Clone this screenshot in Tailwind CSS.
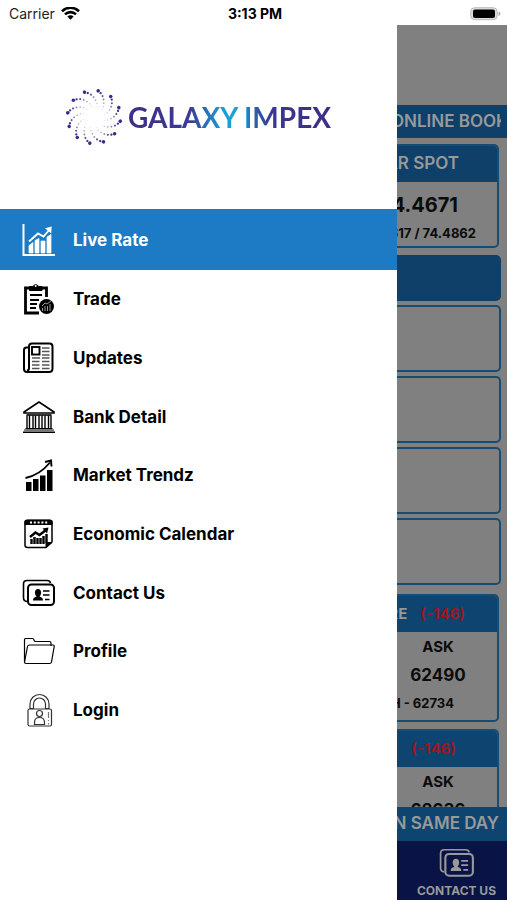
<!DOCTYPE html>
<html lang="en">
<head>
<meta charset="utf-8">
<meta name="viewport" content="width=device-width, initial-scale=1">
<title>Galaxy Impex</title>
<script src="https://cdn.jsdelivr.net/npm/@tailwindcss/browser@4"></script>
</head>
<body class="bg-white font-['Inter',sans-serif] text-black">
<div class="flex h-screen flex-col overflow-hidden">
  <!-- Status bar -->
  <header class="grid h-[25px] shrink-0 grid-cols-3 items-center pt-[3px] pr-[6px] pl-[9px] text-sm">
    <div class="flex items-center gap-[6px] text-[#222]">
      <span>Carrier</span>
      <svg class="h-[14px] w-[19px]" viewBox="0 0 19 14" fill="none" stroke="#000" stroke-width="2.6" aria-label="Wi-Fi"><path d="M1 4.200a12.2 12.2 0 0 1 17 0M4 7.400a7.8 7.8 0 0 1 11 0"/><path d="M6.4 9.600a4.4 4.4 0 0 1 6.2 0L9.500 12.800z" fill="#000" stroke="none"/></svg>
    </div>
    <time class="text-center font-bold">3:13 PM</time>
    <svg class="h-[15px] w-[31px] justify-self-end" viewBox="0 0 31 15" aria-label="Battery full"><rect x=".7" y=".7" width="26.500" height="12" rx="4" fill="#ddd" stroke="#bbb"/><rect x="3" y="2.500" width="22" height="8.500" rx="2" fill="#000"/><path d="M28.500 4.500v4.500q2-.7 2-2.250T28.500 4.500z" fill="#aaa"/></svg>
  </header>

  <div class="flex min-h-0 flex-1">
    <!-- Drawer -->
    <aside class="flex min-w-0 flex-1 flex-col bg-white">
      <div class="flex h-[184px] shrink-0 items-center justify-center gap-[6px]">
        <svg class="h-[58px] w-[56px] shrink-0" viewBox="-87 -90 174 180" aria-hidden="true">
          <defs>
            <g id="arm">
              <circle cx="-64" cy="-52" r="5.500" fill="#392b88"/><circle cx="-54" cy="-55" r="3.600" fill="#403391"/><circle cx="-43" cy="-55.500" r="3.200" fill="#5b52a6"/><circle cx="-32" cy="-53" r="2.800" fill="#7c76bb"/><circle cx="-22" cy="-48" r="2.400" fill="#9a98cd"/><circle cx="-13" cy="-41" r="2" fill="#b3bbe0"/><circle cx="-7" cy="-33" r="1.600" fill="#c5d8ee"/>
            </g>
          </defs>
          <use href="#arm"/><use href="#arm" transform="rotate(30)"/><use href="#arm" transform="rotate(60)"/><use href="#arm" transform="rotate(90)"/><use href="#arm" transform="rotate(120)"/><use href="#arm" transform="rotate(150)"/><use href="#arm" transform="rotate(180)"/><use href="#arm" transform="rotate(210)"/><use href="#arm" transform="rotate(240)"/><use href="#arm" transform="rotate(270)"/><use href="#arm" transform="rotate(300)"/><use href="#arm" transform="rotate(330)"/>
        </svg>
        <h1 class="bg-[linear-gradient(90deg,#3b2f87_0%,#3d3a90_30%,#1c9ad6_46%,#16a5df_56%,#2b62a8_62%,#3d3590_72%,#3b2f87_100%)] bg-clip-text font-['Lato',sans-serif] text-[28px] leading-9 font-bold whitespace-nowrap text-transparent">GALAXY IMPEX</h1>
      </div>
      <nav class="flex flex-col text-[17px] leading-6 font-bold">
        <a href="#" class="flex h-[61px] items-center gap-[17px] bg-[#1d7ac5] pl-[22px] text-white">
          <svg class="size-[34px]" viewBox="0 0 34 34" fill="none" stroke="currentColor"><path d="M1.500 1v31H33" stroke-width="2"/><path d="M7 30V22.500l4-3V30zM13 30V17.500l4-2V30zM19 30V18h4v12zM25 30V14l4-2.500V30z" fill="currentColor" stroke-width=".7"/><path d="M7 18.500l9-8 5.500 3L28 6" stroke-width="1.900"/><path d="M23 5.300L29.700 3.500l-.5 7z" fill="currentColor" stroke="none"/></svg>
          <span>Live Rate</span></a>
        <a href="#" class="flex h-[58px] items-center gap-[17px] pl-[22px]">
          <svg class="size-[34px]" viewBox="0 0 34 34" fill="none" stroke="currentColor"><path d="M8 6H3.500v25H17M19 6h5.500v9" stroke-width="2.800"/><path d="M7.500 8.500V4.500h3.500a3 3 0 0 1 5.500 0H20v4z" fill="currentColor" stroke="currentColor"/><circle cx="13.700" cy="4" r="1" fill="#fff" stroke="none"/><path d="M8 13h12M8 18h9M8 22h7M8 26h6" stroke-width="1.800"/><circle cx="24.500" cy="24.500" r="7.500" fill="currentColor" stroke="none"/><path d="M20.500 29v-3M23 29v-5M25.500 29v-5M28 29v-7M20 24l3-3 2 1 4-3" stroke="#999" stroke-width="1"/></svg>
          <span>Trade</span></a>
        <a href="#" class="flex h-[59px] items-center gap-[17px] pl-[22px]">
          <svg class="size-[34px]" viewBox="0 0 34 34" fill="none" stroke="currentColor"><path d="M7 6.500H4.500Q2 6.500 2 9v19q0 3 3 3h22q3.500 0 3.500-3.500V5.500q0-3-3-3H10Q7 2.500 7 5.500V27q0 2.500-2 2.500" stroke-width="2"/><rect x="10" y="6" width="7.500" height="7.500" stroke-width="1.900"/><path d="M20 7h7.500M20 10.500h7.500M20 14h7.500M10 17h8M20 17h7.500M10 20.500h7.500M20 20.500h7.500M10 24h7.500M20 24h7.500M10 27.500h7.500M20 27.500h7.500" stroke="#555" stroke-width="1.300"/></svg>
          <span>Updates</span></a>
        <a href="#" class="flex h-[59px] items-center gap-[17px] pl-[22px]">
          <svg class="size-[34px]" viewBox="0 0 34 34" fill="none" stroke="currentColor"><path d="M2 12L17 2l15 10v1H2z" stroke-width="1.600"/><path d="M4.500 15h25" stroke-width="1.600"/><path d="M5 15.500V28M7.500 15.500V28M11 15.500V28M13.500 15.500V28M17 15.500V28M20 15.500V28M23 15.500V28M26.500 15.500V28M29 15.500V28" stroke-width="1.400"/><path d="M3.500 28.700h27M1 32.300h32" stroke-width="1.400"/><path d="M2 30.500h30" stroke="#777" stroke-width="2.500"/></svg>
          <span>Bank Detail</span></a>
        <a href="#" class="flex h-[58px] items-center gap-[17px] pl-[22px]">
          <svg class="size-[34px]" viewBox="0 0 34 34" fill="none" stroke="currentColor"><path d="M4 24h5.500v9H4zM11 21h5.500v12H11zM18 17.500h5.500V33H18zM25 12h5.500v21H25z" fill="currentColor" stroke="none"/><path d="M3.500 20C13 18 21 13 28 4.500" stroke-width="1.900"/><path d="M23 4l6-1.500.5 6" stroke-width="1.900"/></svg>
          <span>Market Trendz</span></a>
        <a href="#" class="flex h-[59px] items-center gap-[17px] pl-[22px]">
          <svg class="size-[34px]" viewBox="0 0 34 34" fill="none" stroke="currentColor"><path d="M3 5v23q0 2.500 2.500 2.500H24l6-5.500V5q0-1.500-2-1.500H5Q3 3.500 3 5z" stroke-width="1.500"/><path d="M2.500 8V5.500q0-3 3-3h22q3 0 3 3V8z" fill="currentColor" stroke="none"/><path d="M8 5.500h18" stroke="#fff" stroke-width="2" stroke-dasharray="2 1.800"/><path d="M24 30.500v-5h6z" fill="currentColor" stroke-width="1"/><path d="M8 20l5.500-4.500 4 2.500L24 13" stroke-width="2.400"/><path d="M20.500 11.500l6-1-1.500 6z" fill="currentColor" stroke="none"/><path d="M9.500 27v-5M12.500 27v-7M15.500 27v-6M18.500 27v-6M21.500 27v-8M24.500 26V17" stroke-width="2.400"/></svg>
          <span>Economic Calendar</span></a>
        <a href="#" class="flex h-[59px] items-center gap-[17px] pl-[22px]">
          <svg class="size-[34px]" viewBox="0 0 34 34" fill="none" stroke="currentColor"><g id="contact"><path d="M5 25.500Q1.500 25 1.500 22V8q0-3.500 3.500-3.500h20Q28 4.500 28.500 7" stroke-width="1.600"/><rect x="6" y="8.500" width="26" height="20.500" rx="3.500" stroke-width="2"/><path d="M11 24.500c0-2.500 1-3 3.500-4-2.500-2.500-2-7.500 1.500-7.500s4 5 1.500 7.500c2.500 1 3.500 1.500 3.500 4z" fill="currentColor" stroke="none"/><path d="M21 15h6.500M21 19h6.500M23 23.500h4.500" stroke-width="1.700"/></g></svg>
          <span>Contact Us</span></a>
        <a href="#" class="flex h-[58px] items-center gap-[17px] pl-[22px]">
          <svg class="size-[34px]" viewBox="0 0 34 34" fill="none" stroke="currentColor" stroke-width="1.200" stroke-linejoin="round"><path d="M2.500 28V5.500q0-1 1-1h7q1 0 1.500 1.500t1.500 1.500h14q1.500 0 1.500 1.500v3"/><path d="M2.500 28L5.500 12.500q.3-1.500 2-1.500h23.500q1.500 0 1.200 1.500L29.500 28q-.3 1.500-2 1.500H4Q2.500 29.500 2.500 28z"/></svg>
          <span>Profile</span></a>
        <a href="#" class="flex h-[59px] items-center gap-[17px] pl-[22px]">
          <svg class="size-[34px]" viewBox="0 0 34 34" fill="none" stroke="#333" stroke-width="1.200"><rect x="6" y="16" width="23.500" height="17" rx="1.500"/><path d="M8 15.500V11a9.500 9.500 0 0 1 19 0v4.500h-3.500V11a6 6 0 0 0-12 0v4.500z"/><circle cx="17.500" cy="20.500" r="3"/><path d="M12.500 31.500v-2q0-5 5-5t5 5v2z"/><path d="M26.500 19v6M26.500 27v1M26.500 30v1.500" stroke="#777"/></svg>
          <span>Login</span></a>
      </nav>
    </aside>

    <!-- Dimmed rates page beside the open drawer -->
    <main class="flex w-[110px] shrink-0 flex-col overflow-hidden bg-[#808080] font-bold whitespace-nowrap text-[#0b0b0b]">
      <div class="h-[80px] shrink-0"></div>
      <div class="h-[33px] shrink-0 bg-[#0e4069] pr-[6px]">
        <p class="-ml-[6px] overflow-hidden text-[17px] leading-[33px] font-semibold text-[#999]">ONLINE BOOKING</p>
      </div>
      <div class="flex min-h-0 flex-1 flex-col overflow-hidden pt-[6px]">
        <section class="mr-[8px] h-[104px] shrink-0 overflow-hidden rounded-r-[5px] border-2 border-l-0 border-[#174c73]">
          <h2 class="-mt-[2px] flex h-[38px] items-center justify-end bg-[#0e4069] pt-[2px] pr-[38px] text-[17px] font-semibold text-[#999]">DOLLAR SPOT</h2>
          <p class="flex h-[46px] items-center justify-end pr-[39px] text-[20px]">74.4671</p>
          <p class="flex justify-end pr-[21px] text-[13px] leading-[10px]">74.4617 / 74.4862</p>
        </section>
        <div class="mt-[7px] mr-[6px] h-[46px] shrink-0 rounded-r-[5px] bg-[#0e4069]"></div>
        <div class="mt-[4px] mr-[6px] flex shrink-0 flex-col gap-[4px]">
          <div class="h-[67px] rounded-r-[5px] border-2 border-l-0 border-[#174c73]"></div>
          <div class="h-[67px] rounded-r-[5px] border-2 border-l-0 border-[#174c73]"></div>
          <div class="h-[67px] rounded-r-[5px] border-2 border-l-0 border-[#174c73]"></div>
          <div class="h-[67px] rounded-r-[5px] border-2 border-l-0 border-[#174c73]"></div>
        </div>
        <section class="mt-[9px] mr-[8px] h-[128px] shrink-0 overflow-hidden rounded-r-[5px] border-2 border-l-0 border-[#174c73]">
          <h2 class="-mt-[2px] flex h-[38px] items-center justify-end gap-[13px] bg-[#0e4570] pt-[2px] pr-[32px] text-[15px] text-[#999]">FUTURE <span class="text-[#9c1520]">(-146)</span></h2>
          <p class="flex h-[30px] items-center justify-center pr-[18px] text-[15px]">ASK</p>
          <p class="flex h-[27px] items-center justify-center pr-[18px] text-[17px]">62490</p>
          <p class="flex h-[29px] items-center justify-end pr-[43px] text-[13px]">H - 62734</p>
        </section>
        <section class="mt-[7px] mr-[8px] h-[128px] shrink-0 overflow-hidden rounded-r-[5px] border-2 border-l-0 border-[#174c73]">
          <h2 class="-mt-[2px] flex h-[38px] items-center justify-end bg-[#0e4570] pt-[2px] pr-[41px] text-[15px] text-[#9c1520]">(-146)</h2>
          <p class="flex h-[30px] items-center justify-center pr-[18px] text-[15px]">ASK</p>
          <p class="flex h-[27px] items-center justify-center pr-[18px] text-[17px]">62636</p>
        </section>
      </div>
      <p class="flex h-[34px] shrink-0 items-center justify-end bg-[#0e4570] pr-[8px] text-[17px] font-semibold text-[#999]">BULLION SAME DAY</p>
      <a href="#" class="flex h-[59px] shrink-0 flex-col items-center gap-[2px] bg-[#091346] pt-[4px] pl-[9px] text-xs text-[#999]">
        <svg class="size-[36px]" viewBox="0 0 34 34" fill="none" stroke="currentColor" aria-hidden="true"><use href="#contact"/></svg>
        <span>CONTACT US</span>
      </a>
    </main>
  </div>
</div>
</body>
</html>
